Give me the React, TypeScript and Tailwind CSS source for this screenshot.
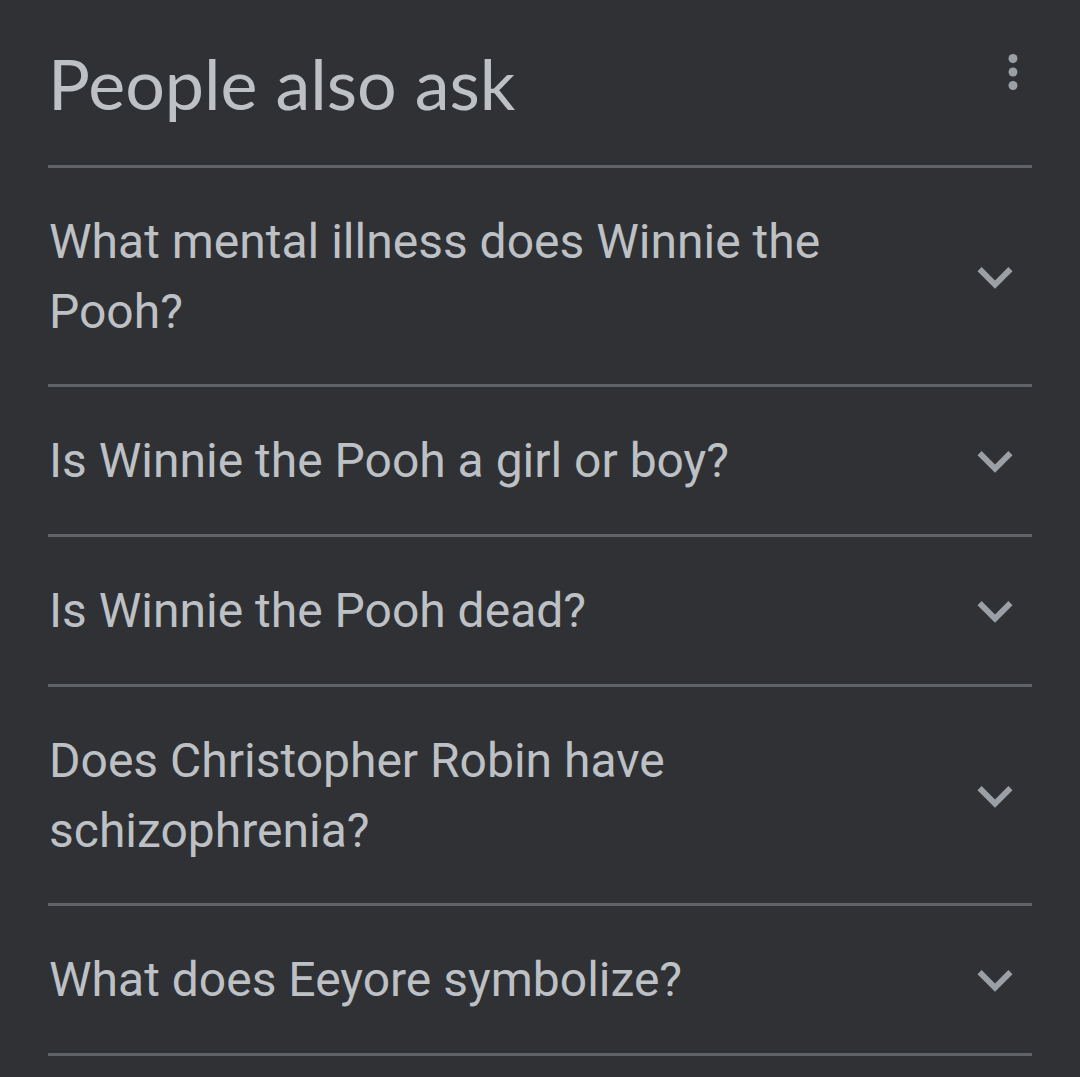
const questions = [
  "What mental illness does Winnie the Pooh?",
  "Is Winnie the Pooh a girl or boy?",
  "Is Winnie the Pooh dead?",
  "Does Christopher Robin have schizophrenia?",
  "What does Eeyore symbolize?",
];

function MoreIcon() {
  return (
    <svg width={54} height={54} viewBox="0 0 24 24" fill="#9aa0a6">
      <circle cx="12" cy="6" r="2" />
      <circle cx="12" cy="12" r="2" />
      <circle cx="12" cy="18" r="2" />
    </svg>
  );
}

function ExpandIcon() {
  return (
    <svg width={70} height={70} viewBox="0 0 24 24" fill="#9aa0a6">
      <path d="M16.59 8.59L12 13.17 7.41 8.59 6 10l6 6 6-6z" />
    </svg>
  );
}

function QuestionRow({ text }: { text: string }) {
  return (
    <div className="flex items-center justify-between border-b-[3px] border-[#5f6368] pt-[39px] pb-[38px]">
      <span className="pl-[1px] pr-[120px] text-[48px] leading-[69.5px] text-[#bdc1c6] font-['Roboto',sans-serif]">
        {text}
      </span>
      <div className="mr-[2px] shrink-0">
        <ExpandIcon />
      </div>
    </div>
  );
}

export default function App() {
  return (
    <div className="min-h-[1077px] w-[1080px] bg-[#303134] px-[48px]">
      <div className="flex h-[165px] justify-between border-b-[3px] border-[#5f6368] box-content">
        <h2 className="pt-[38px] text-[70px] leading-[90px] text-[#bdc1c6] font-['Lato',sans-serif]">
          People also ask
        </h2>
        <div className="-mr-[8px] pt-[45px]">
          <MoreIcon />
        </div>
      </div>
      {questions.map((q) => (
        <QuestionRow key={q} text={q} />
      ))}
    </div>
  );
}
